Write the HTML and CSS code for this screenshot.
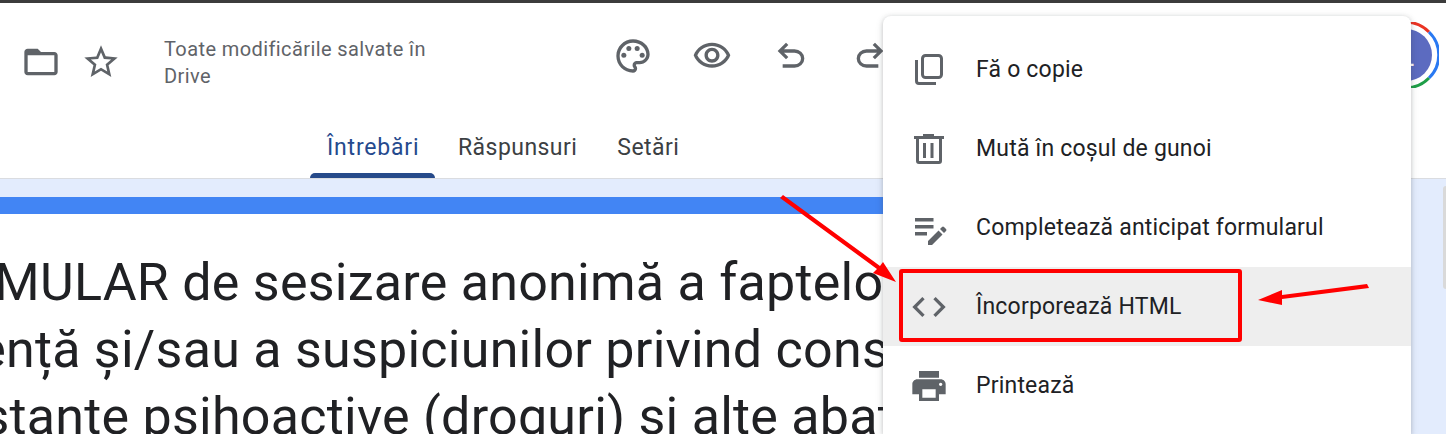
FILE: index.html
```html
<!DOCTYPE html>
<html lang="ro">
<head>
<meta charset="utf-8">
<title>Formular</title>
<link rel="stylesheet" href="styles.css">
</head>
<body>
<div class="page">
  <header class="header">
    <div class="toprow">
      <div class="left">
        <svg class="ic" viewBox="0 0 24 24"><path d="M20 6h-8l-2-2H4c-1.1 0-1.99.9-1.99 2L2 18c0 1.1.9 2 2 2h16c1.1 0 2-.9 2-2V8c0-1.1-.9-2-2-2zm0 12H4V8h16v10z"/></svg>
        <svg class="ic" viewBox="0 0 24 24"><path d="M22 9.24l-7.19-.62L12 2 9.19 8.63 2 9.24l5.46 4.73L5.82 21 12 17.27 18.18 21l-1.63-7.03L22 9.24zM12 15.4l-3.76 2.27 1-4.28-3.32-2.88 4.38-.38L12 6.1l1.71 4.04 4.38.38-3.32 2.88 1 4.28L12 15.4z"/></svg>
        <div class="status">Toate modificările salvate în Drive</div>
      </div>
      <div class="actions">
        <svg class="ic" viewBox="0 0 24 24"><path d="M12 22C6.49 22 2 17.51 2 12S6.49 2 12 2s10 4.04 10 9c0 3.31-2.69 6-6 6h-1.77c-.28 0-.5.22-.5.5 0 .12.05.23.13.33.41.47.64 1.06.64 1.67A2.5 2.5 0 0 1 12 22zm0-18c-4.41 0-8 3.59-8 8s3.59 8 8 8c.28 0 .5-.22.5-.5a.54.54 0 0 0-.14-.35c-.41-.46-.63-1.05-.63-1.65a2.5 2.5 0 0 1 2.5-2.5H16c2.21 0 4-1.79 4-4 0-3.86-3.59-7-8-7z"/><circle cx="6.5" cy="11.5" r="1.5"/><circle cx="9.5" cy="7.5" r="1.5"/><circle cx="14.5" cy="7.5" r="1.5"/><circle cx="17.5" cy="11.5" r="1.5"/></svg>
        <svg class="ic" viewBox="0 0 24 24"><path d="M12 6c3.79 0 7.17 2.13 8.82 5.5C19.17 14.87 15.79 17 12 17s-7.17-2.13-8.82-5.5C4.83 8.13 8.21 6 12 6m0-2C7 4 2.73 7.11 1 11.5 2.73 15.89 7 19 12 19s9.27-3.11 11-7.5C21.27 7.11 17 4 12 4zm0 5c1.38 0 2.5 1.12 2.5 2.5S13.38 14 12 14s-2.5-1.12-2.5-2.5S10.62 9 12 9m0-2c-2.48 0-4.5 2.02-4.5 4.5S9.52 16 12 16s4.5-2.02 4.5-4.5S14.48 7 12 7z"/></svg>
        <svg class="ic" viewBox="0 0 24 24"><path d="M7 19v-2h7.1q1.575 0 2.738-1T18 13.5q0-1.5-1.162-2.5T14.1 10H7.8l2.6 2.6L9 14 4 9l5-5 1.4 1.4L7.8 8h6.3q2.425 0 4.163 1.575T20 13.5q0 2.35-1.737 3.925T14.1 19H7z"/></svg>
        <svg class="ic flip" viewBox="0 0 24 24"><path d="M7 19v-2h7.1q1.575 0 2.738-1T18 13.5q0-1.5-1.162-2.5T14.1 10H7.8l2.6 2.6L9 14 4 9l5-5 1.4 1.4L7.8 8h6.3q2.425 0 4.163 1.575T20 13.5q0 2.35-1.737 3.925T14.1 19H7z"/></svg>
      </div>
      <div class="avatar">
        <svg class="ring" viewBox="0 0 66 66"><path class="r-red" d="M10 10A32 32 0 0 1 56 10"/><path class="r-blue" d="M56 10A32 32 0 0 1 56 56"/><path class="r-green" d="M56 56A32 32 0 0 1 10 56"/></svg>
        <span class="disc">L</span>
      </div>
    </div>
    <nav class="tabs">
      <a class="tab active">Întrebări</a>
      <a class="tab">Răspunsuri</a>
      <a class="tab">Setări</a>
    </nav>
  </header>
  <main class="content">
    <section class="card">
      <div class="band"></div>
      <h1 class="title">
        <span class="line">FORMULAR de sesizare anonimă a faptelor</span>
        <span class="line">violență și/sau a suspiciunilor privind consum</span>
        <span class="line">substante psihoactive (droguri) si alte abateri</span>
      </h1>
    </section>
    <aside class="side"></aside>
  </main>
</div>

<div class="menu">
  <div class="item">
    <svg class="mi" viewBox="0 0 40 40"><rect class="st" x="13.5" y="5.5" width="19" height="22" rx="3"/><path class="st" d="M7.5 10V31a2.5 2.5 0 0 0 2.5 2.5H27"/></svg>
    <span>Fă o copie</span>
  </div>
  <div class="item">
    <svg class="mi" viewBox="0 0 40 40"><path d="M14 5h11v2h10v3H5V7h9z"/><path class="st" d="M8.5 10V32a1.5 1.5 0 0 0 1.5 1.5H30a1.5 1.5 0 0 0 1.5-1.5V10"/><path d="M14 14h3v15h-3zM21.500 14h3v15h-3z"/></svg>
    <span>Mută în coșul de gunoi</span>
  </div>
  <div class="item">
    <svg class="mi" viewBox="0 0 40 40"><path d="M6 10h18.500v3.500H6zM6 17h18.500v3.500H6zM6 24h12v3.500H6z"/><path d="M19 37v-4l10.500-10.500 4 4L23 37zM31 21l2-2q1-1 2 0l2 2q1 1 0 2l-2 2z"/></svg>
    <span>Completează anticipat formularul</span>
  </div>
  <div class="item hover">
    <svg class="mi" viewBox="0 0 24 24"><path d="M9.4 16.6L4.800 12l4.600-4.600L8 6l-6 6 6 6 1.400-1.400zm5.200 0l4.600-4.600-4.600-4.600L16 6l6 6-6 6-1.400-1.400z"/></svg>
    <span>Încorporează HTML</span>
  </div>
  <div class="item">
    <svg class="mi" viewBox="0 0 24 24"><path d="M19 8H5c-1.660 0-3 1.340-3 3v6h4v4h12v-4h4v-6c0-1.660-1.340-3-3-3zm-3 11H8v-5h8v5zm3-7c-.55 0-1-.45-1-1s.45-1 1-1 1 .45 1 1-.45 1-1 1zm-1-9H6v4h12V3z"/></svg>
    <span>Printează</span>
  </div>
</div>

<div class="callout"></div>
<svg class="arrows" viewBox="0 0 1446 434">
  <polygon points="780,198 783,195 880,266 883,262 896,282 873,273 877,269"/>
  <polygon points="1367,284 1369,288 1282,299 1282,305 1258,300 1282,290 1282,295"/>
</svg>
</body>
</html>
```
FILE: styles.css
```css
* { box-sizing: border-box; }
html, body { margin: 0; padding: 0; }
body {
  width: 1446px;
  height: 434px;
  overflow: hidden;
  position: relative;
  font-family: Roboto, "Liberation Sans", sans-serif;
  background: #e3ecfd;
}
.page { display: flex; flex-direction: column; height: 434px; overflow: hidden; }

.header {
  background: #fff;
  border-top: 3px solid #3c3c3c;
  border-bottom: 1px solid #dadce0;
  height: 179px;
  flex: none;
}
.toprow { display: flex; height: 105px; }
.ic { width: 40px; height: 40px; fill: #5f6368; flex: none; display: block; }
.flip { transform: scaleX(-1); }

.left {
  display: flex;
  align-items: center;
  gap: 20px;
  padding: 13px 0 0 21px;
  width: 613px;
  flex: none;
}
.status {
  margin: 1px 0 0 23px;
  width: 290px;
  font-size: 20px;
  line-height: 27px;
  letter-spacing: .4px;
  color: #5f6368;
}
.actions { display: flex; align-items: center; gap: 39px; flex: none; }
.avatar {
  position: relative;
  width: 66px;
  height: 66px;
  margin: 19px 7px 0 auto;
  flex: none;
}
.ring { width: 66px; height: 66px; display: block; }
.ring path { fill: none; stroke-width: 3; }
.r-red { stroke: #ea3323; }
.r-blue { stroke: #2979f2; }
.r-green { stroke: #1e9e47; }
.disc {
  position: absolute;
  inset: 7px;
  border-radius: 50%;
  background: #5c6bc0;
  color: #fff;
  font-size: 30px;
  display: flex;
  align-items: center;
  justify-content: center;
}

.tabs { display: flex; height: 70px; padding-left: 310px; gap: 6px; }
.tab {
  position: relative;
  display: flex;
  align-items: center;
  padding: 8px 17px 0;
  font-size: 23px;
  letter-spacing: .45px;
  font-weight: 450;
  color: #3c4043;
}
.tab.active { color: #254a8e; width: 125px; letter-spacing: .8px; }
.tab.active::after {
  content: "";
  position: absolute;
  left: 0;
  right: 0;
  bottom: 0;
  height: 5px;
  background: #264a8a;
  border-radius: 5px 5px 0 0;
}

.content { display: flex; justify-content: space-between; flex: 1; min-height: 0; }
.card { width: 1100px; margin-top: 18px; background: #fff; flex: none; }
.band { height: 17px; background: #4285f4; }
.title {
  margin: 0 0 0 -103px;
  padding-top: 35px;
  font-size: 52px;
  font-weight: 400;
  letter-spacing: .25px;
  line-height: 67px;
  color: #202124;
  white-space: nowrap;
}
.line { display: block; }
.side {
  width: 3px;
  height: 103px;
  margin-top: 7px;
  background: #d9d9d9;
  border-radius: 4px 0 0 4px;
  flex: none;
}

.menu {
  position: absolute;
  left: 883px;
  top: 16px;
  width: 528px;
  height: 418px;
  padding-top: 14px;
  background: #fff;
  border-radius: 8px 8px 0 0;
  box-shadow: 0 1px 4px rgba(60,64,67,.25), 0 2px 8px rgba(60,64,67,.12);
}
.item {
  display: flex;
  align-items: center;
  gap: 27px;
  height: 79px;
  padding-left: 26px;
  font-size: 23px;
  letter-spacing: .2px;
  color: #202124;
}
.item.hover { background: #eee; }
.mi { width: 40px; height: 40px; fill: #5f6368; flex: none; display: block; }
.st { fill: none; stroke: #5f6368; stroke-width: 3; }

.callout {
  position: absolute;
  left: 899px;
  top: 269px;
  width: 343px;
  height: 73px;
  border: 4px solid #f00;
  border-radius: 3px;
}
.arrows { position: absolute; left: 0; top: 0; width: 1446px; height: 434px; fill: #f00; pointer-events: none; }
```
